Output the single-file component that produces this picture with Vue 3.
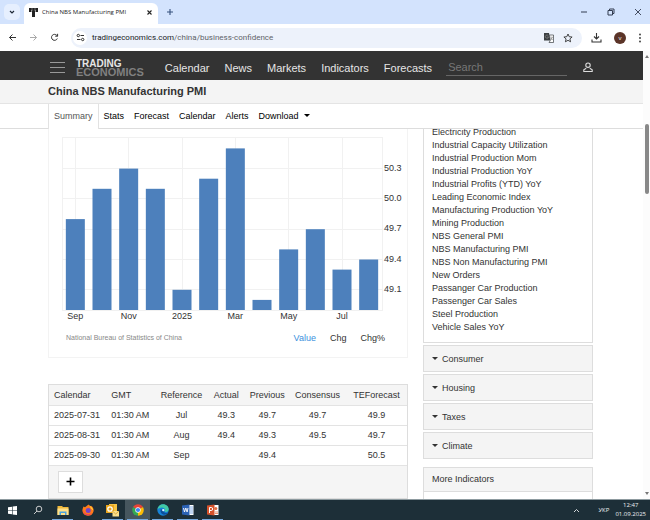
<template>
  <div class="screen">
    <!-- browser tabs -->
    <div class="tab-strip">
      <button class="tab-search" aria-label="Search tabs">
        <svg width="8" height="8" viewBox="0 0 8 8"><path d="M2 3l2 2 2-2" fill="none" stroke="#1f2937" stroke-width="1.2" /></svg>
      </button>
      <div class="browser-tab">
        <svg width="11" height="11" viewBox="0 0 11 11">
          <path d="M1 1h9v4H7.500V3H7v7H4V3h-.5v2H1z" fill="#222" />
          <path d="M4 1v3M7 1v3" stroke="#aaa" stroke-width=".6" />
        </svg>
        <span class="browser-tab-title">China NBS Manufacturing PMI</span>
        <button class="icon-btn" aria-label="Close tab">
          <svg width="7" height="7" viewBox="0 0 7 7"><path d="M1.500 1.500l4 4M5.500 1.500l-4 4" stroke="#222" stroke-width="1.1" /></svg>
        </button>
      </div>
      <button class="icon-btn new-tab" aria-label="New tab">
        <svg width="8" height="8" viewBox="0 0 8 8"><path d="M4 1v6M1 4h6" stroke="#35507c" stroke-width="1.1" /></svg>
      </button>
      <div class="window-controls">
        <button class="icon-btn" aria-label="Minimize">
          <svg width="8" height="8" viewBox="0 0 8 8"><path d="M1 4h6" stroke="#333c50" /></svg>
        </button>
        <button class="icon-btn" aria-label="Restore">
          <svg width="8" height="8" viewBox="0 0 8 8"><path d="M1 2.500h4.500V7H1zM2.500 2.500V1H7v4.500H5.500" fill="none" stroke="#333c50" /></svg>
        </button>
        <button class="icon-btn" aria-label="Close">
          <svg width="8" height="8" viewBox="0 0 8 8"><path d="M1 1l6 6M7 1L1 7" stroke="#333c50" stroke-width=".9" /></svg>
        </button>
      </div>
    </div>

    <!-- address bar -->
    <div class="toolbar">
      <button class="icon-btn" aria-label="Back">
        <svg width="9" height="9" viewBox="0 0 9 9"><path d="M8 4.500H1.500M4.500 1.500l-3 3 3 3" fill="none" stroke="#333" /></svg>
      </button>
      <button class="icon-btn" aria-label="Forward">
        <svg width="9" height="9" viewBox="0 0 9 9"><path d="M1 4.500h6.500M4.500 1.500l3 3-3 3" fill="none" stroke="#aaa" /></svg>
      </button>
      <button class="icon-btn" aria-label="Reload">
        <svg width="9" height="9" viewBox="0 0 9 9"><path d="M7.300 5.500A3 3 0 1 1 6.800 2.400L7.500 3M7.600.8v2.400H5.200" fill="none" stroke="#333" /></svg>
      </button>
      <div class="address">
        <span class="site-info">
          <svg width="9" height="9" viewBox="0 0 9 9">
            <path d="M4.500 2.500H8M1 6.500h3.500" stroke="#333" />
            <circle cx="2.300" cy="2.500" r="1.200" fill="none" stroke="#333" />
            <circle cx="6.700" cy="6.500" r="1.200" fill="none" stroke="#333" />
          </svg>
        </span>
        <span class="url"><span class="host">tradingeconomics.com</span>/china/business-confidence</span>
        <button class="icon-btn" aria-label="Translate">
          <svg width="10" height="10" viewBox="0 0 10 10">
            <path d="M0 0h5l1.500 7.500H0z" fill="#3c4043" />
            <path d="M5.500 2H9.500v7.500H5l1.300-2z" fill="#fff" stroke="#3c4043" stroke-width=".7" />
            <path d="M4.300 2.800A1.600 1.600 0 1 0 4.500 4H3.200M6.800 4.200h2M8.400 4.200L7 7M7 5l1.700 2" fill="none" stroke="#888" stroke-width=".7" />
          </svg>
        </button>
        <button class="icon-btn" aria-label="Bookmark">
          <svg width="10" height="10" viewBox="0 0 10 10"><path d="M5 1l1.200 2.700 2.900.3-2.200 1.900.7 2.900L5 7.300 2.400 8.800l.7-2.900L.9 4l2.900-.3z" fill="none" stroke="#333" stroke-width=".9" /></svg>
        </button>
      </div>
      <button class="icon-btn" aria-label="Downloads">
        <svg width="11" height="11" viewBox="0 0 11 11"><path d="M5.500 1v6M3 4.500L5.500 7 8 4.500M1 7.500V10h9V7.500" fill="none" stroke="#333" stroke-width="1.100" /></svg>
      </button>
      <button class="avatar">v</button>
      <button class="icon-btn" aria-label="Menu">
        <svg width="4" height="10" viewBox="0 0 4 10"><g fill="#333"><circle cx="2" cy="1.500" r=".9" /><circle cx="2" cy="5" r=".9" /><circle cx="2" cy="8.500" r=".9" /></g></svg>
      </button>
    </div>

    <div class="viewport">
      <div class="site">
        <header class="site-header wrap">
          <button class="icon-btn" aria-label="Open menu">
            <svg width="15" height="12" viewBox="0 0 15 12"><path d="M0 .5h15M0 5.500h15M0 10.500h15" stroke="#999" /></svg>
          </button>
          <a class="logo" href="#"><span>TRADING</span><span class="logo-sub">ECONOMICS</span></a>
          <nav class="main-nav">
            <a v-for="item in navItems" :key="item" href="#">{{ item }}</a>
          </nav>
          <input class="search" type="text" placeholder="Search" aria-label="Search">
          <a class="user" href="#" aria-label="Account">
            <svg width="10" height="11" viewBox="0 0 10 11"><circle cx="5" cy="3.200" r="2.200" fill="none" stroke="#ddd" stroke-width="1.100" /><path d="M3.200 6.300L.8 7.800v1.700h8.400V7.800L6.800 6.300" fill="none" stroke="#ddd" stroke-width="1.100" /></svg>
          </a>
        </header>

        <div class="title-bar wrap">
          <h1>China NBS Manufacturing PMI</h1>
        </div>

        <nav class="page-tabs wrap">
          <a
            v-for="tab in pageTabs"
            :key="tab"
            href="#"
            :class="{ active: tab === 'Summary' }"
          >{{ tab }}<i v-if="tab === 'Download'" class="caret" /></a>
        </nav>

        <main class="content">
          <div class="primary">
            <section class="chart-panel">
              <svg class="chart" viewBox="0 0 358 194" role="img" aria-label="China NBS Manufacturing PMI">
                <g stroke="#f1f1f1" fill="none" shape-rendering="crispEdges">
                  <rect x="13.500" y="8.500" width="320" height="173" />
                  <line v-for="t in ticks" :key="t" x1="13" x2="334" :y1="yOf(t)" :y2="yOf(t)" />
                  <template v-for="(b, i) in bars" :key="i">
                    <line v-if="b.label" :x1="xOf(i)" :x2="xOf(i)" y1="8" y2="182" />
                  </template>
                </g>
                <rect
                  v-for="(b, i) in bars"
                  :key="i"
                  :x="xOf(i) - 9.5"
                  :y="yOf(b.value)"
                  width="19"
                  :height="base - yOf(b.value)"
                  fill="#4d80bc"
                />
                <text v-for="t in ticks" :key="t" x="335" :y="yOf(t) + 2">{{ t.toFixed(1) }}</text>
                <text v-for="(b, i) in bars" :key="i" :x="xOf(i)" y="190" text-anchor="middle">{{ b.label }}</text>
              </svg>
              <div class="chart-footer">
                <span class="source">National Bureau of Statistics of China</span>
                <button
                  v-for="m in modes"
                  :key="m"
                  :class="{ selected: m === mode }"
                  @click="mode = m"
                >{{ m }}</button>
              </div>
            </section>

            <section class="calendar">
              <table>
                <colgroup>
                  <col v-for="c in columns" :key="c.name" :style="{ width: c.width }">
                </colgroup>
                <thead>
                  <tr><th v-for="c in columns" :key="c.name">{{ c.name }}</th></tr>
                </thead>
                <tbody>
                  <tr v-for="row in rows" :key="row[0]">
                    <td v-for="(cell, i) in row" :key="i">{{ cell }}</td>
                  </tr>
                </tbody>
              </table>
              <div class="calendar-footer">
                <button aria-label="Add">
                  <svg width="9" height="9" viewBox="0 0 9 9"><path d="M4.500 0.500v8M.5 4.500h8" stroke="#000" stroke-width="1.600" /></svg>
                </button>
              </div>
            </section>
          </div>

          <aside class="sidebar">
            <ul class="related">
              <li v-for="r in related" :key="r"><a href="#">{{ r }}</a></li>
            </ul>
            <button v-for="g in groups" :key="g" class="group"><i class="caret" />{{ g }}</button>
            <section class="more">
              <h2>More Indicators</h2>
            </section>
          </aside>
        </main>
      </div>

      <div class="scrollbar">
        <i class="arrow up" />
        <div class="track"><div class="thumb" /></div>
        <i class="arrow down" />
      </div>
    </div>

    <!-- taskbar -->
    <footer class="taskbar">
      <button class="task" aria-label="Start">
        <svg width="9" height="9" viewBox="0 0 9 9"><path d="M0 1.300l4-.6v3.600H0zM4.600.6L9 0v4.300H4.600zM0 4.800h4v3.500l-4-.6zM4.600 4.800H9V9l-4.400-.6z" fill="#fff" /></svg>
      </button>
      <button class="task" aria-label="Search">
        <svg width="10" height="10" viewBox="0 0 10 10"><circle cx="6" cy="4" r="2.800" fill="none" stroke="#ddd" stroke-width=".9" /><path d="M4 6L1 9" stroke="#ddd" stroke-width=".9" /></svg>
      </button>
      <button class="task open" aria-label="Explorer">
        <svg width="12" height="11" viewBox="0 0 12 11"><path d="M.5 1H5l1 1h5.500v8H.5z" fill="#f0b93c" /><path d="M.5 3.500h11V10H.5z" fill="#ffe08a" /><path d="M2.500 10V6.500h7V10H8V8H4v2z" fill="#4aa3df" /></svg>
      </button>
      <button class="task" aria-label="Firefox">
        <svg width="12" height="12" viewBox="0 0 12 12"><path d="M1.500 2.500L3 3.300 6.500.5 8 2.200l1-.5C11 3 12 5 11.500 7.500A5.700 5.700 0 0 1 .4 7C.3 5 1 4 1.500 2.500z" fill="#ff7a1a" /><path d="M7 1c2 2 4 2.500 4.200 5.500L9 4.500z" fill="#ffd43b" /><circle cx="6.200" cy="6.400" r="2.500" fill="#7543c8" /><path d="M1 6c1 4 5 5.500 9 3-2 3.500-8.500 3.500-9-3z" fill="#f03a5f" /></svg>
      </button>
      <button class="task open" aria-label="Outlook">
        <svg width="13" height="13" viewBox="0 0 13 13"><path d="M3 0h8v9H3z" fill="#f6c344" /><path d="M0 1h8v8H0z" fill="#e8a51c" /><circle cx="4" cy="5" r="2.200" fill="none" stroke="#fff" stroke-width="1.300" /><path d="M6.500 7H13v5.500H6.500z" fill="#fbe08c" /><path d="M6.500 7l3.200 3L13 7" fill="none" stroke="#c88a13" stroke-width=".6" /></svg>
      </button>
      <button class="task open current" aria-label="Chrome">
        <svg width="12" height="12" viewBox="0 0 12 12"><path d="M6 6L1 3.100A5.800 5.800 0 0 1 11 3.100z" fill="#e94335" /><path d="M6 6L1 3.100A5.800 5.800 0 0 0 6 11.800z" fill="#34a853" /><path d="M6 6l5-2.900A5.800 5.800 0 0 1 6 11.800z" fill="#fbbc05" /><circle cx="6" cy="6" r="2.700" fill="#fff" /><circle cx="6" cy="6" r="2.100" fill="#4285f4" /></svg>
      </button>
      <button class="task open" aria-label="Edge">
        <svg width="12" height="12" viewBox="0 0 12 12"><circle cx="6" cy="6" r="5.700" fill="#1683d8" /><path d="M.4 5.500C1 2 3.500.3 6 .3c3.500 0 5.700 2.500 5.700 5 0 2-2 3-4 2.500C9 5 7 3.500 5 3.500S1 4.500.4 5.500z" fill="#42c9a5" /><path d="M4 5c-1.500 2.500.5 5.500 3 5.800 2 0 3.500-1 4.200-2.300-2 1-4.500.5-4.800-1.500z" fill="#0c4f9c" /><circle cx="6.300" cy="6.100" r="1.200" fill="#d8f3ff" /></svg>
      </button>
      <button class="task open" aria-label="Word">
        <svg width="12" height="12" viewBox="0 0 12 12"><path d="M5 1h6.500v10H5z" fill="#fff" /><path d="M8 3h3M8 5h3M8 7h3M8 9h3" stroke="#4a86d8" stroke-width=".7" /><path d="M0 1.500L7.500.5v11L0 10.500z" fill="#2b62b5" /><path d="M1.500 4l1 4L3.800 4l1.300 4L6 4" fill="none" stroke="#fff" stroke-width=".9" /></svg>
      </button>
      <button class="task open" aria-label="PowerPoint">
        <svg width="12" height="12" viewBox="0 0 12 12"><path d="M5 1h6.500v10H5z" fill="#fff" /><circle cx="8.800" cy="4.500" r="1.500" fill="#e36a3c" /><path d="M8 8h3M8 9.500h3" stroke="#e36a3c" stroke-width=".7" /><path d="M0 1.500L7.500.5v11L0 10.500z" fill="#d5522b" /><path d="M2.500 9V3.500h1.700a1.500 1.500 0 0 1 0 3H2.500" fill="none" stroke="#fff" stroke-width="1" /></svg>
      </button>
      <div class="tray">
        <svg width="7" height="5" viewBox="0 0 7 5"><path d="M1 4l2.500-2.500L6 4" fill="none" stroke="#e5e9ea" stroke-width=".9" /></svg>
        <span>УКР</span>
        <span class="clock">12:47<br>01.09.2025</span>
      </div>
    </footer>
  </div>
</template>

<script setup>
import { ref } from 'vue'

const navItems = ['Calendar', 'News', 'Markets', 'Indicators', 'Forecasts']
const pageTabs = ['Summary', 'Stats', 'Forecast', 'Calendar', 'Alerts', 'Download']

const modes = ['Value', 'Chg', 'Chg%']
const mode = ref('Value')

// monthly PMI values, every other month is labelled
const bars = [
  { value: 49.8, label: 'Sep' },
  { value: 50.1 },
  { value: 50.3, label: 'Nov' },
  { value: 50.1 },
  { value: 49.1, label: '2025' },
  { value: 50.2 },
  { value: 50.5, label: 'Mar' },
  { value: 49.0 },
  { value: 49.5, label: 'May' },
  { value: 49.7 },
  { value: 49.3, label: 'Jul' },
  { value: 49.4 },
]
const ticks = [50.3, 50.0, 49.7, 49.4, 49.1]
const base = 181
const xOf = (i) => 13 + (i + 0.5) * (320 / 12)
const yOf = (v) => base - (v - 48.9) * 101

const columns = [
  { name: 'Calendar', width: '16%' },
  { name: 'GMT', width: '14%' },
  { name: 'Reference', width: '14%' },
  { name: 'Actual', width: '11%' },
  { name: 'Previous', width: '12%' },
  { name: 'Consensus', width: '16%' },
  { name: 'TEForecast', width: '17%' },
]
const rows = [
  ['2025-07-31', '01:30 AM', 'Jul', '49.3', '49.7', '49.7', '49.9'],
  ['2025-08-31', '01:30 AM', 'Aug', '49.4', '49.3', '49.5', '49.7'],
  ['2025-09-30', '01:30 AM', 'Sep', '', '49.4', '', '50.5'],
]

const related = [
  'Electricity Production',
  'Industrial Capacity Utilization',
  'Industrial Production Mom',
  'Industrial Production YoY',
  'Industrial Profits (YTD) YoY',
  'Leading Economic Index',
  'Manufacturing Production YoY',
  'Mining Production',
  'NBS General PMI',
  'NBS Manufacturing PMI',
  'NBS Non Manufacturing PMI',
  'New Orders',
  'Passanger Car Production',
  'Passenger Car Sales',
  'Steel Production',
  'Vehicle Sales YoY',
]
const groups = ['Consumer', 'Housing', 'Taxes', 'Climate']
</script>

<style>
body {
  margin: 0;
}
</style>

<style scoped>
.screen {
  display: flex;
  flex-direction: column;
  height: 100vh;
  overflow: hidden;
  background: #fff;
  color: #333;
  font-family: "Liberation Sans", Arial, sans-serif;
  font-size: 9px;
}

.screen * {
  box-sizing: border-box;
}

a {
  color: inherit;
  text-decoration: none;
}

button {
  padding: 0;
  border: none;
  background: none;
  color: inherit;
  font: inherit;
}

svg {
  display: block;
}

.icon-btn {
  display: flex;
  align-items: center;
  justify-content: center;
  flex-shrink: 0;
}

/* browser chrome */
.tab-strip {
  display: flex;
  align-items: center;
  height: 24px;
  padding: 0 8px 0 4px;
  background: #d3e3fd;
  flex-shrink: 0;
  font-family: "Open Sans", "Noto Sans", sans-serif;
}

.tab-search {
  display: flex;
  align-items: center;
  justify-content: center;
  width: 16px;
  height: 16px;
  border-radius: 5px;
  background: #e6effe;
}

.browser-tab {
  display: flex;
  align-items: center;
  align-self: flex-end;
  gap: 3px;
  width: 134px;
  height: 21px;
  margin-left: 4px;
  padding: 0 5px 3px 4px;
  border-radius: 6px 6px 0 0;
  background: #fff;
}

.browser-tab-title {
  flex: 1;
  font-size: 6px;
  white-space: nowrap;
  color: #222;
}

.new-tab {
  margin-left: 8px;
}

.window-controls {
  display: flex;
  gap: 19px;
  margin-left: auto;
}

.toolbar {
  display: flex;
  align-items: center;
  gap: 12px;
  height: 27px;
  padding: 0 8px;
  background: #fff;
  flex-shrink: 0;
}

.address {
  display: flex;
  align-items: center;
  flex: 1;
  gap: 9px;
  height: 20px;
  margin-right: -3px;
  padding: 0 9px 0 2px;
  border-radius: 10px;
  background: #edf2fb;
}

.site-info {
  display: flex;
  align-items: center;
  justify-content: center;
  width: 14px;
  height: 14px;
  margin-right: -4px;
  border-radius: 50%;
  background: #fff;
}

.url {
  flex: 1;
  font-family: Roboto, "Noto Sans", sans-serif;
  font-size: 8px;
  color: #5f6368;
}

.host {
  color: #202124;
}

.avatar {
  width: 12px;
  height: 12px;
  border-radius: 50%;
  background: #5b3428;
  color: #eee;
  font-size: 6px;
}

/* page */
.viewport {
  display: flex;
  flex: 1;
  min-height: 0;
}

.site {
  display: flex;
  flex-direction: column;
  flex: 1;
  min-width: 0;
  overflow: hidden;
}

.wrap {
  display: flex;
  flex-shrink: 0;
  padding: 0 50px 0 48px;
}

.site-header {
  align-items: center;
  height: 29px;
  padding-top: 4px;
  padding-left: 50px;
  background: #333;
  color: #e6e6e6;
}

.logo {
  display: flex;
  flex-direction: column;
  margin-left: 11px;
  font-size: 10px;
  font-weight: 700;
  line-height: 9px;
}

.logo-sub {
  font-size: 11px;
  color: #808080;
}

.main-nav {
  display: flex;
  gap: 15px;
  margin-left: 21px;
  font-size: 11px;
}

.search {
  flex: 1;
  min-width: 0;
  height: 17px;
  margin-left: 14px;
  padding: 0 2px;
  border: none;
  border-bottom: 1px solid #666;
  background: transparent;
  color: #ddd;
  font-family: inherit;
  font-size: 11px;
}

.search::placeholder {
  color: #777;
  opacity: 1;
}

.user {
  margin: 0 0 0 16px;
}

.title-bar {
  align-items: center;
  height: 24px;
  padding-bottom: 2px;
  border-bottom: 1px solid #e4e4e4;
  background: #f4f4f4;
}

h1 {
  margin: 0;
  font-size: 11px;
  font-weight: 700;
}

.page-tabs {
  height: 25px;
  border-bottom: 1px solid #ddd;
  color: #000;
}

.page-tabs a {
  display: flex;
  align-items: center;
  height: 25px;
  padding: 0 5px 2px;
}

.page-tabs .active {
  border: solid #e2e2e2;
  border-width: 0 1px;
  background: #fff;
  color: #555;
}

.caret {
  border: 3px solid transparent;
  border-top-color: currentColor;
  border-bottom: none;
}

.page-tabs .caret {
  margin-left: 5px;
}

.content {
  display: grid;
  grid-template-columns: 36fr 17fr;
  gap: 15px;
  flex: 1;
  min-height: 0;
  margin: 0 50px 0 48px;
  overflow: hidden;
}

.chart-panel {
  padding-bottom: 13px;
  border: solid #f3f3f3;
  border-width: 0 1px 1px;
}

.chart {
  width: 100%;
  height: auto;
}

.chart text {
  font-size: 9px;
  fill: #333;
}

.chart-footer {
  display: flex;
  align-items: center;
  gap: 14px;
  height: 13px;
  margin-top: 8px;
  padding: 0 22px 0 17px;
  color: #333;
}

.source {
  flex: 1;
  font-size: 7px;
  color: #888;
}

.chart-footer .selected {
  color: #3b8fdd;
}

.calendar {
  margin-top: 26px;
  border: 1px solid #ddd;
}

table {
  width: 100%;
  border-collapse: collapse;
  table-layout: fixed;
}

th,
td {
  height: 20px;
  padding: 0;
  border-bottom: 1px solid #e3e3e3;
  font-weight: 400;
  line-height: 12px;
  text-align: center;
  white-space: nowrap;
}

th {
  background: #f5f5f5;
}

th:nth-child(-n + 2),
td:nth-child(-n + 2) {
  padding-left: 5px;
  text-align: left;
}

.calendar-footer {
  padding: 5px 9px;
  background: #f5f5f5;
}

.calendar-footer button {
  display: flex;
  align-items: center;
  justify-content: center;
  width: 25px;
  height: 22px;
  border: 1px solid #ddd;
  background: #fff;
}

.related {
  margin: -4px 0 0;
  padding: 0 9px 8px 8px;
  border: 1px solid #ddd;
  list-style: none;
  line-height: 13px;
  white-space: nowrap;
}

.group {
  display: flex;
  align-items: center;
  gap: 4px;
  width: 100%;
  height: 27px;
  margin-top: 2px;
  padding: 0 8px;
  border: 1px solid #ddd;
  background: #f4f4f4;
}

.more {
  height: 60px;
  margin-top: 8px;
  border: 1px solid #ddd;
}

h2 {
  margin: 0;
  padding: 0 8px;
  border-bottom: 1px solid #ddd;
  background: #f5f5f5;
  font-size: 9px;
  font-weight: 400;
  line-height: 23px;
}

/* scrollbar */
.scrollbar {
  display: flex;
  flex-direction: column;
  align-items: center;
  width: 7px;
  padding: 4px 0;
  background: #fcfcfc;
}

.arrow {
  border: 2px solid transparent;
}

.up {
  border-top: none;
  border-bottom: 3px solid #777;
}

.down {
  border-bottom: none;
  border-top: 3px solid #777;
}

.track {
  flex: 1;
  width: 4px;
  padding-top: 66px;
}

.thumb {
  height: 70px;
  border-radius: 2px;
  background: #888;
}

/* taskbar */
.taskbar {
  display: flex;
  height: 21px;
  border-top: 1px solid #8d9a9f;
  background: #1d2f38;
  color: #eef2f3;
  flex-shrink: 0;
}

.task {
  position: relative;
  display: flex;
  align-items: center;
  justify-content: center;
  width: 25px;
}

.task.open::after {
  content: "";
  position: absolute;
  right: 2px;
  bottom: 0;
  left: 2px;
  height: 1px;
  background: #76a9dd;
}

.task.current {
  background: #46565e;
}

.tray {
  display: flex;
  align-items: center;
  gap: 18px;
  margin-left: auto;
  padding-right: 4px;
  font-family: "Open Sans", "Noto Sans", sans-serif;
  font-size: 6px;
}

.clock {
  margin-left: -12px;
  line-height: 9px;
  text-align: center;
}
</style>
